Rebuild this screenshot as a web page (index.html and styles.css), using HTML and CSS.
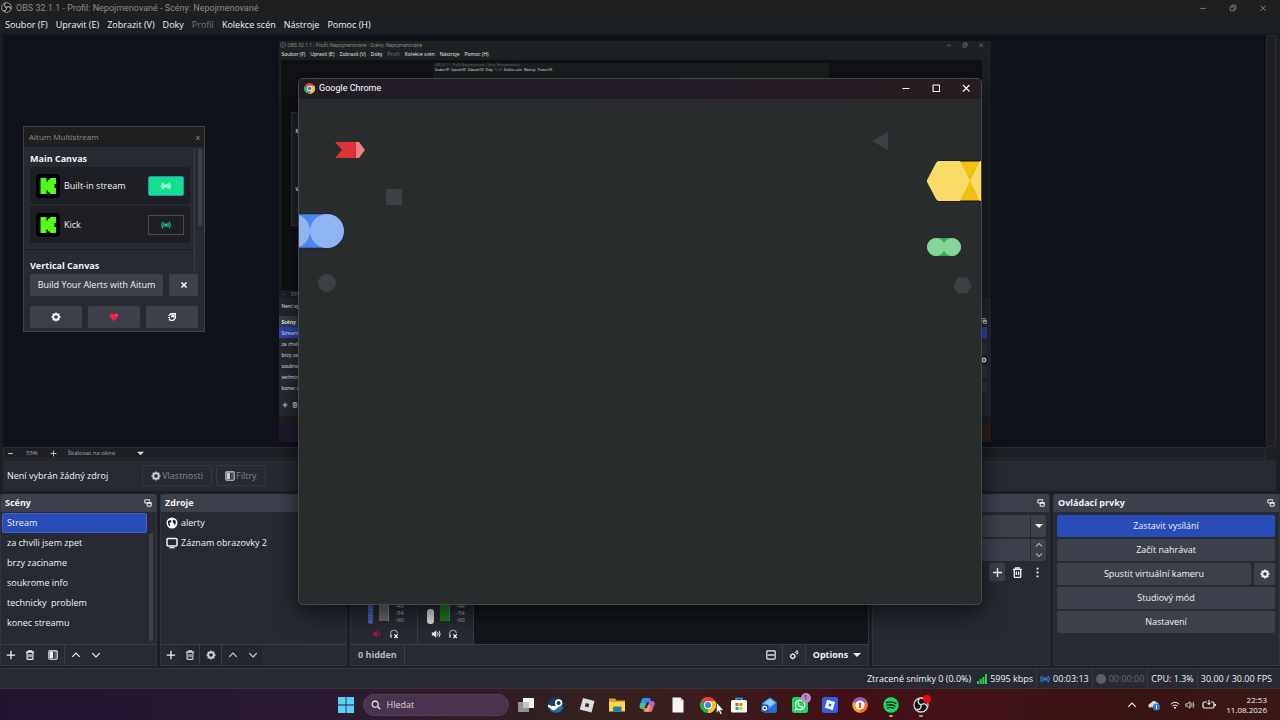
FILE: index.html
```html
<!DOCTYPE html>
<html lang="cs">
<head>
<meta charset="UTF-8">
<meta name="viewport" content="width=device-width, initial-scale=1.0">
<title>OBS 32.1.1</title>
<link rel="stylesheet" href="styles.css">
</head>
<body>

<!-- icons -->
<svg class="sprite" aria-hidden="true">
    <symbol id="obs" viewBox="0 0 16 16">
        <circle cx="8" cy="8" r="7" fill="#111" stroke="currentColor" stroke-width="1.3"/>
        <path d="M8 8C4.500 7 4.500 3.500 6.500 2M8 8c2.600-2.600 5.600-.8 5.800 1.600M8 8c.9 3.500-2.200 5.200-4.500 4.200" fill="none" stroke="currentColor" stroke-width="1.500"/>
    </symbol>
    <symbol id="min" viewBox="0 0 10 10"><path d="M1.500 5.500h7" stroke="currentColor" stroke-width="1"/></symbol>
    <symbol id="max" viewBox="0 0 10 10"><rect x="2" y="2" width="6.500" height="6.500" rx=".5" fill="none" stroke="currentColor" stroke-width="1.100"/></symbol>
    <symbol id="restore" viewBox="0 0 10 10"><path d="M1.500 3.500h5v5h-5zM3.500 3.500v-2h5v5h-2" fill="none" stroke="currentColor"/></symbol>
    <symbol id="close" viewBox="0 0 10 10"><path d="M2 2l6.500 6.500M8.500 2L2 8.500" stroke="currentColor" stroke-width="1.100"/></symbol>
    <symbol id="cross" viewBox="0 0 10 10"><path d="M2.500 2.500l5 5M7.500 2.500l-5 5" stroke="currentColor" stroke-width="1.700"/></symbol>
    <symbol id="gear" viewBox="0 0 12 12">
        <circle cx="6" cy="6" r="3.300" fill="none" stroke="currentColor" stroke-width="2.200"/>
        <path d="M6 .5v2M6 9.500v2M.5 6h2M9.500 6h2M2.100 2.100l1.400 1.400M8.500 8.500l1.400 1.400M2.100 9.900l1.400-1.400M8.500 3.500l1.400-1.400" stroke="currentColor" stroke-width="1.800"/>
    </symbol>
    <symbol id="gears" viewBox="0 0 12 12">
        <circle cx="4.500" cy="7.500" r="2.500" fill="none" stroke="currentColor" stroke-width="1.500"/>
        <circle cx="9.500" cy="2.800" r="1.400" fill="none" stroke="currentColor" stroke-width="1.200"/>
        <path d="M4.500 3.800v1M4.500 10.200v1.200M.8 7.500H2M7 7.500h1.200M9.500.4v1M9.500 4.200v1M7 2.800h1" stroke="currentColor"/>
    </symbol>
    <symbol id="filter" viewBox="0 0 12 12">
        <rect x="1" y="1" width="10" height="10" rx="1" fill="none" stroke="currentColor" stroke-width="1.300"/>
        <path d="M2 2h4v8H2z" fill="currentColor"/><path d="M7 2h3v8H7z" fill="currentColor" opacity=".25"/>
    </symbol>
    <symbol id="popout" viewBox="0 0 10 10"><path d="M7 3V1H1v4h3M4 4.500h5V9H4z" fill="none" stroke="currentColor" stroke-width="1.200"/><path d="M4 4h5v2H4z" fill="currentColor"/></symbol>
    <symbol id="plus" viewBox="0 0 12 12"><path d="M6 1v10M1 6h10" stroke="currentColor" stroke-width="1.500"/></symbol>
    <symbol id="minus" viewBox="0 0 12 12"><path d="M2 6h8" stroke="currentColor" stroke-width="1.500"/></symbol>
    <symbol id="trash" viewBox="0 0 12 12"><path d="M1 2.500h10M4 2V1h4v1M2.500 3v7.500q0 .7.7.7h5.600q.7 0 .7-.7V3M4.800 4.800v4M7.200 4.800v4" fill="none" stroke="currentColor" stroke-width="1.400"/></symbol>
    <symbol id="up" viewBox="0 0 12 12"><path d="M1.500 8.200L6 3.800l4.500 4.400" fill="none" stroke="currentColor" stroke-width="1.500"/></symbol>
    <symbol id="down" viewBox="0 0 12 12"><path d="M1.500 3.800L6 8.200l4.500-4.400" fill="none" stroke="currentColor" stroke-width="1.500"/></symbol>
    <symbol id="dots" viewBox="0 0 12 12"><path d="M5 .8h2v2H5zM5 5h2v2H5zM5 9.200h2v2H5z" fill="currentColor"/></symbol>
    <symbol id="caret" viewBox="0 0 8 8"><path d="M0 2h8L4 6z" fill="currentColor"/></symbol>
    <symbol id="live" viewBox="0 0 14 12">
        <circle cx="7" cy="6" r="2.100" fill="currentColor"/>
        <path d="M4.800 3q-2 3 0 6M9.200 3q2 3 0 6M2.600 1.500q-3 4.500 0 9M11.400 1.500q3 4.500 0 9" fill="none" stroke="currentColor" stroke-width="1.500"/>
    </symbol>
    <symbol id="kick" viewBox="0 0 24 24">
        <rect width="24" height="24" rx="4" fill="#000"/>
        <path d="M4.500 4h6v3.500h1.500V5.500h2V4h6v6h-1.500v4H20v6h-6v-1.500h-2v-2h-1.500V20h-6z" fill="#53fc18"/>
    </symbol>
    <symbol id="globe" viewBox="0 0 12 12">
        <circle cx="6" cy="6" r="5.500" fill="#fff"/>
        <path d="M2 4l2-1 1.500.5L5 5.500 3.500 6l.8 2-.8 1.500L2 7zM7 2.500l2.500 1L10 6 8.500 8 7.500 6 6.500 5z" fill="#272a33"/>
    </symbol>
    <symbol id="monitor" viewBox="0 0 12 12"><rect x="1" y="1.500" width="10" height="7.500" rx="1" fill="none" stroke="currentColor" stroke-width="1.500"/><path d="M3.500 10.700h5" stroke="currentColor" stroke-width="1.300"/></symbol>
    <symbol id="speaker" viewBox="0 0 12 12"><path d="M1 4.300h2.200L6.300 1.500v9L3.200 7.700H1z" fill="currentColor"/><path d="M7.800 3.800q1.500 2.200 0 4.400M9.600 2.200q2.600 3.800 0 7.600" fill="none" stroke="currentColor" stroke-width="1.200"/></symbol>
    <symbol id="volume" viewBox="0 0 12 12"><path d="M1 4.500h2.200L6 2v8L3.200 7.500H1z" fill="none" stroke="currentColor"/><path d="M7.800 4q1.300 2 0 4M9.500 2.600q2.300 3.400 0 6.800" fill="none" stroke="currentColor"/></symbol>
    <symbol id="muted" viewBox="0 0 12 12"><path d="M1 4.300h2.200L6.300 1.500v9L3.200 7.700H1zM7 6l1.500-2L10 6 8.500 8z" fill="currentColor"/></symbol>
    <symbol id="headphones" viewBox="0 0 12 12"><path d="M2 10V5.500q0-4 4-4t4 4" fill="none" stroke="#aaa" stroke-width="1.300"/><path d="M1.500 6.500h2v4h-2z" fill="#aaa"/><path d="M6.500 6.500l4 4.500M10.500 6.500l-4 4.500" stroke="#fff" stroke-width="1.500"/></symbol>
    <symbol id="layout" viewBox="0 0 12 12"><rect x="1" y="1" width="10" height="10" rx="1" fill="none" stroke="currentColor" stroke-width="1.400"/><path d="M2 6h8" stroke="currentColor" stroke-width="1.600"/></symbol>
    <symbol id="chrome" viewBox="0 0 16 16">
        <path d="M8 8L1.070 4A8 8 0 0 1 14.930 4z" fill="#ea4335"/>
        <path d="M8 8l6.930-4A8 8 0 0 1 8 16z" fill="#fbc116"/>
        <path d="M8 8v8A8 8 0 0 1 1.070 4z" fill="#34a853"/>
        <path d="M8 4h6.930A8 8 0 0 1 8 16l3.500-6z" fill="#fbc116"/>
        <circle cx="8" cy="8" r="4" fill="#fff"/><circle cx="8" cy="8" r="3" fill="#3b82f0"/>
    </symbol>
</svg>

<div class="obs">
    <header class="title-bar">
        <svg class="icon"><use href="#obs"/></svg>
        <span>OBS 32.1.1 - Profil: Nepojmenované - Scény: Nepojmenované</span>
        <div class="window-buttons">
            <button aria-label="Minimalizovat"><svg><use href="#min"/></svg></button>
            <button aria-label="Obnovit"><svg><use href="#restore"/></svg></button>
            <button aria-label="Zavřít"><svg><use href="#close"/></svg></button>
        </div>
    </header>
    <nav class="menu-bar">
        <a href="#">Soubor (F)</a>
        <a href="#">Upravit (E)</a>
        <a href="#">Zobrazit (V)</a>
        <a href="#">Doky</a>
        <a href="#" class="off">Profil</a>
        <a href="#">Kolekce scén</a>
        <a href="#">Nástroje</a>
        <a href="#">Pomoc (H)</a>
    </nav>

    <main class="preview">
        <div class="stage">
            <!-- captured desktop -->
            <div class="mini">
                <div class="mini-title">
                    <svg><use href="#obs"/></svg>
                    <span>OBS 32.1.1 - Profil: Nepojmenované - Scény: Nepojmenované</span>
                    <div class="mini-buttons">
                        <svg><use href="#min"/></svg>
                        <svg><use href="#restore"/></svg>
                        <svg><use href="#close"/></svg>
                    </div>
                </div>
                <div class="mini-menu">
                    <span>Soubor (F)</span><span>Upravit (E)</span><span>Zobrazit (V)</span><span>Doky</span><span class="off">Profil</span><span>Kolekce scén</span><span>Nástroje</span><span>Pomoc (H)</span>
                </div>
                <div class="mini-stage">
                    <div class="nano">
                        <div class="nano-title">OBS 32.1.1 - Profil: Nepojmenované - Scény: Nepojmenované</div>
                        <div class="nano-menu"><span>Soubor (F)</span><span>Upravit (E)</span><span>Zobrazit (V)</span><span>Doky</span><span class="off">Profil</span><span>Kolekce scén</span><span>Nástroje</span><span>Pomoc (H)</span></div>
                    </div>
                    <div class="mini-float"><b>Main Canvas</b><b>Vertical Canvas</b></div>
                </div>
                <div class="mini-zoom">−&nbsp;&nbsp;&nbsp;&nbsp;55%</div>
                <div class="mini-context">Není vybrán žádný zdroj</div>
                <div class="mini-docks">
                    <div class="mini-scenes">
                        <b>Scény</b>
                        <span class="selected">Stream</span>
                        <span>za chvíli jsem</span>
                        <span>brzy zaciname</span>
                        <span>soukrome info</span>
                        <span>technicky</span>
                        <span>konec streamu</span>
                        <div class="mini-tools"><svg><use href="#plus"/></svg><svg><use href="#trash"/></svg></div>
                    </div>
                    <div class="mini-controls">
                        <svg><use href="#popout"/></svg>
                        <i class="on"></i><i></i>
                        <svg><use href="#gear"/></svg>
                        <i></i><i></i>
                    </div>
                </div>
                <div class="mini-taskbar"></div>
            </div>
        </div>
        <div class="scroll-track"></div>
    </main>

    <div class="zoom-bar">
        <button aria-label="Oddálit"><svg><use href="#minus"/></svg></button>
        <span>55%</span>
        <button aria-label="Přiblížit"><svg><use href="#plus"/></svg></button>
        <div class="zoom-mode">
            <select aria-label="Měřítko"><option>Škálovat na okno</option></select>
            <svg><use href="#caret"/></svg>
        </div>
    </div>

    <div class="context-bar">
        <span>Není vybrán žádný zdroj</span>
        <button disabled><svg><use href="#gear"/></svg>Vlastnosti</button>
        <button disabled><svg><use href="#filter"/></svg>Filtry</button>
    </div>

    <div class="docks">
        <section class="dock">
            <h2>Scény <svg><use href="#popout"/></svg></h2>
            <div class="scene-body">
                <ul class="scenes">
                    <li class="selected">Stream</li>
                    <li>za chvíli jsem zpet</li>
                    <li>brzy zaciname</li>
                    <li>soukrome info</li>
                    <li>technicky&nbsp; problem</li>
                    <li>konec streamu</li>
                </ul>
                <div class="scene-scroll"></div>
            </div>
            <div class="tools">
                <button aria-label="Přidat"><svg><use href="#plus"/></svg></button>
                <button aria-label="Odebrat"><svg><use href="#trash"/></svg></button>
                <button aria-label="Filtry scény" class="spaced"><svg><use href="#filter"/></svg></button>
                <button aria-label="Nahoru" class="split"><svg><use href="#up"/></svg></button>
                <button aria-label="Dolů"><svg><use href="#down"/></svg></button>
            </div>
        </section>

        <section class="dock">
            <h2>Zdroje</h2>
            <ul class="sources">
                <li><svg><use href="#globe"/></svg>alerty</li>
                <li><svg><use href="#monitor"/></svg>Záznam obrazovky 2</li>
            </ul>
            <div class="tools">
                <button aria-label="Přidat zdroj"><svg><use href="#plus"/></svg></button>
                <button aria-label="Odebrat zdroj" class="dim"><svg><use href="#trash"/></svg></button>
                <button aria-label="Vlastnosti zdroje" class="split dim"><svg><use href="#gear"/></svg></button>
                <button aria-label="Zdroj nahoru" class="split dim"><svg><use href="#up"/></svg></button>
                <button aria-label="Zdroj dolů" class="dim"><svg><use href="#down"/></svg></button>
            </div>
        </section>

        <section class="dock mixer">
            <div class="channels">
                <div class="channel">
                    <div class="meters">
                        <div class="fader"></div>
                        <div class="meter"></div>
                        <div class="scale"><span>-48</span><span>-54</span><span>-60</span></div>
                    </div>
                    <div class="channel-buttons">
                        <button aria-label="Zrušit ztlumení" class="red"><svg><use href="#muted"/></svg></button>
                        <button aria-label="Sledování"><svg><use href="#headphones"/></svg></button>
                    </div>
                </div>
                <div class="channel">
                    <div class="meters">
                        <div class="fader knob"></div>
                        <div class="meter green"></div>
                        <div class="scale"><span>-48</span><span>-54</span><span>-60</span></div>
                    </div>
                    <div class="channel-buttons">
                        <button aria-label="Ztlumit"><svg><use href="#speaker"/></svg></button>
                        <button aria-label="Sledování zvuku"><svg><use href="#headphones"/></svg></button>
                    </div>
                </div>
            </div>
            <div class="mixer-bar">
                <span>0 hidden</span>
                <button aria-label="Rozložení"><svg><use href="#layout"/></svg></button>
                <button aria-label="Pokročilé"><svg><use href="#gears"/></svg></button>
                <button class="options">Options <svg><use href="#caret"/></svg></button>
            </div>
        </section>

        <section class="dock">
            <h2><svg><use href="#popout"/></svg></h2>
            <div class="transitions">
                <div class="field">
                    <select aria-label="Přechod"></select>
                    <span class="arrows"><svg><use href="#caret"/></svg></span>
                </div>
                <div class="field">
                    <input type="text" aria-label="Doba trvání">
                    <span class="arrows"><svg><use href="#up"/></svg><svg><use href="#down"/></svg></span>
                </div>
                <div class="transition-tools">
                    <button aria-label="Přidat přechod" class="filled"><svg><use href="#plus"/></svg></button>
                    <button aria-label="Odebrat přechod"><svg><use href="#trash"/></svg></button>
                    <button aria-label="Další"><svg><use href="#dots"/></svg></button>
                </div>
            </div>
        </section>

        <section class="dock">
            <h2>Ovládací prvky <svg><use href="#popout"/></svg></h2>
            <div class="controls">
                <button class="on">Zastavit vysílání</button>
                <button>Začít nahrávat</button>
                <div class="pair">
                    <button>Spustit virtuální kameru</button>
                    <button aria-label="Nastavení kamery"><svg><use href="#gear"/></svg></button>
                </div>
                <button>Studiový mód</button>
                <button>Nastavení</button>
            </div>
        </section>
    </div>

    <footer class="status-bar">
        <span>Ztracené snímky 0 (0.0%)</span>
        <span><svg class="signal" viewBox="0 0 10 10"><path d="M0 7h2v3H0zM2.700 5h2v5h-2zM5.400 3h2v7h-2zM8 0h2v10H8z" fill="#2fcf4a"/></svg>5995 kbps</span>
        <span class="line"><svg class="blue"><use href="#live"/></svg>00:03:13</span>
        <span class="line faded"><svg viewBox="0 0 10 10"><circle cx="5" cy="5" r="5" fill="#5c5e62"/></svg>00:00:00</span>
        <span class="line">CPU: 1.3%</span>
        <span class="line">30.00 / 30.00 FPS</span>
    </footer>
</div>

<!-- Windows taskbar -->
<div class="taskbar">
    <div class="task-center">
        <button class="start" aria-label="Start"><svg viewBox="0 0 16 16"><path d="M0 0h7.600v7.600H0zM8.400 0H16v7.600H8.400zM0 8.400h7.600V16H0zM8.400 8.400H16V16H8.400z" fill="#5bd0f7"/></svg></button>
        <label class="search">
            <svg viewBox="0 0 12 12"><circle cx="5" cy="5" r="3.700" fill="none" stroke="#fff" stroke-width="1.300"/><path d="M7.800 7.800l3.200 3.200" stroke="#fff" stroke-width="1.400"/></svg>
            <input type="text" placeholder="Hledat" aria-label="Hledat">
        </label>
        <div class="apps">
            <svg viewBox="0 0 16 16"><rect x="5" y="1" width="11" height="10" fill="#f2f2f2"/><rect x="0" y="5" width="11" height="10" fill="#8f918f"/><rect x="5" y="5" width="6" height="6" fill="#c4c6c3"/></svg>
            <svg viewBox="0 0 16 16"><circle cx="8" cy="8" r="7.800" fill="#173d63"/><path d="M.5 10a7.800 7.800 0 0 0 15 0z" fill="#1a75aa"/><path d="M0 7.500l6 2.500 3-3 3 2-4 3-2.500 1L0 10z" fill="#fff"/><circle cx="10.600" cy="6" r="2.900" fill="#173d63" stroke="#fff" stroke-width="1.600"/><circle cx="5.500" cy="11" r="2.300" fill="#fff"/></svg>
            <svg viewBox="0 0 16 16"><path d="M4 1l11.500 3L12.500 15.500.8 12.500z" fill="#d9dde0"/><path d="M6.800 6l3.500.9-.9 3.400-3.500-.9z" fill="#292b2d"/></svg>
            <svg viewBox="0 0 16 16"><path d="M0 1.500h6l1.500 2H16V14H0z" fill="#e3a51c"/><path d="M0 5h16v9.500H0z" fill="#fcd456"/><path d="M4 10.500q0-1 1-1h6.500q1 0 1 1v4H4z" fill="#1f7fae"/></svg>
            <svg viewBox="0 0 16 16"><path d="M4.500 1H10q1.500 0 2 2l-1 2H8l-2.500 7H3Q-.5 11.500.8 8L2.500 3Q3 1 4.500 1z" fill="#2a93e8"/><path d="M2 6l4-.5L4.500 12H3Q0 11.500 1 8z" fill="#4acb7b"/><path d="M11.500 15H6q-1.500 0-2-2l1-2h3l2.500-7H13q3.500.5 2.200 4l-1.700 5q-.5 2-2 2z" fill="#e0609a"/><path d="M6 12l2-1 1-3h3l-2 6q-1 1-3 1-1.500-1-1-3z" fill="#f5a048"/><path d="M10.500 4H13q3.500.5 2.200 4l-4.200 1z" fill="#a865e0"/></svg>
            <svg viewBox="0 0 16 16"><path d="M2.500.5h8l3 3v12h-11z" fill="#f6f4f2"/><path d="M10.500.5v3h3z" fill="#b9b6b3"/></svg>
            <svg><use href="#chrome"/></svg>
            <svg viewBox="0 0 16 16"><path d="M5 4V1.500h6V4" fill="none" stroke="#36a6e8" stroke-width="1.500"/><rect y="3" width="16" height="12.500" rx="1.500" fill="#f4f4f4"/><path d="M4.500 6h3v3h-3z" fill="#f25022"/><path d="M8.500 6h3v3h-3z" fill="#7fba00"/><path d="M4.500 10h3v3h-3z" fill="#00a4ef"/><path d="M8.500 10h3v3h-3z" fill="#ffb900"/></svg>
            <svg viewBox="0 0 16 16"><path d="M1 6l8-5.500L15.500 5v9q0 1.500-1.500 1.500H3z" fill="#3d9be9"/><path d="M3 6l6-4 5 4-6 4z" fill="#8fccf5"/><path d="M15.500 6v8q0 1.500-1.500 1.500H4z" fill="#1f6fd0"/><rect y="7.500" width="7.500" height="7.500" rx="1.500" fill="#1559b5"/><circle cx="3.700" cy="11.200" r="1.900" fill="none" stroke="#fff" stroke-width="1.200"/></svg>
            <div class="app">
                <svg viewBox="0 0 16 16"><rect width="16" height="16" rx="2.500" fill="#1fd35f"/><path d="M3.500 12.800l.6-2.400a4.700 4.700 0 1 1 1.800 1.700z" fill="none" stroke="#fff" stroke-width="1.200"/><path d="M6 5.500l1 0 .6 1.500-.6.700q.6 1.200 1.800 1.700l.8-.7 1.300.7q-.2 1.500-1.800 1.300Q6 9.700 5.500 7z" fill="#fff"/></svg>
                <span class="badge">1</span>
            </div>
            <svg viewBox="0 0 16 16"><rect width="16" height="16" rx="2.500" fill="#3160e8"/><path d="M5 2.800l8 2.200-2.200 8L2.800 10.800z" fill="#fff"/><path d="M7 6.400l2.600.7-.7 2.500-2.500-.7z" fill="#3160e8"/></svg>
            <svg viewBox="0 0 16 16"><circle cx="8" cy="8" r="7.700" fill="#f5a623"/><path d="M1 5A7.700 7.700 0 0 1 15 5l-3 1H4z" fill="#8c54d8"/><path d="M15 5a7.700 7.700 0 0 1-7 10.700V11z" fill="#f4692d"/><circle cx="8" cy="8" r="4.600" fill="#fff"/><circle cx="8" cy="7" r="1.500" fill="#d1551f"/><path d="M7.200 8h1.600l.5 3H6.700z" fill="#d1551f"/></svg>
            <div class="app">
                <svg viewBox="0 0 16 16"><circle cx="8" cy="8" r="7.700" fill="#1ed760"/><path d="M3.500 5.500q5-1.500 9.300.9M4 8.200q4.200-1.200 7.800.9M4.500 10.800q3.500-1 6.300.7" fill="none" stroke="#10291a" stroke-width="1.400" stroke-linecap="round"/></svg>
                <span class="running"></span>
            </div>
            <div class="app light">
                <svg><use href="#obs"/></svg>
                <span class="dot"></span>
                <span class="running"></span>
            </div>
        </div>
        <svg class="cursor" viewBox="0 0 8 13"><path d="M.5.500v10.500l2.300-2.200 1.700 3.700 1.600-.8-1.700-3.500h3.100z" fill="#fff" stroke="#333" stroke-width=".5"/></svg>
    </div>
    <div class="tray">
        <svg><use href="#up"/></svg>
        <svg class="cloud" viewBox="0 0 14 12"><path d="M2 8.500Q0 5 4 4q2-3.500 6-.5 2.500.5 2 4.500z" fill="#d5d7da"/><circle cx="9.500" cy="8" r="3.600" fill="#2b7cd3"/><path d="M9.500 6v4" stroke="#fff"/></svg>
        <svg viewBox="0 0 12 12"><path d="M1 5q5-4.500 10 0M3 7.200q3-2.700 6 0" fill="none" stroke="#eee" stroke-width="1.200"/><circle cx="6" cy="9.300" r="1.200" fill="#eee"/></svg>
        <svg><use href="#volume"/></svg>
        <svg class="battery" viewBox="0 0 14 12"><path d="M5 3H2.500q-1.500 0-1.500 1.500v3Q1 9 2.500 9h8Q12 9 12 7.500v-3Q12 3 10.500 3H9M7 1v5M5.500 4.500h3M13.300 5v2" fill="none" stroke="#eee" stroke-width="1.200"/></svg>
        <div class="clock">22:53<br>11.08.2026</div>
    </div>
</div>

<!-- Aitum floating dock -->
<aside class="aitum">
    <header>Aitum Multistream <button aria-label="Zavřít panel">x</button></header>
    <div class="aitum-body">
        <div class="aitum-list">
            <div class="canvas">
                <h3>Main Canvas</h3>
                <div class="output">
                    <svg><use href="#kick"/></svg>
                    <span>Built-in stream</span>
                    <button class="live" aria-label="Built-in stream živě"><svg><use href="#live"/></svg></button>
                </div>
                <div class="output">
                    <svg><use href="#kick"/></svg>
                    <span>Kick</span>
                    <button aria-label="Kick živě"><svg><use href="#live"/></svg></button>
                </div>
            </div>
            <div class="canvas next">
                <h3>Vertical Canvas</h3>
            </div>
        </div>
        <div class="aitum-scroll"></div>
    </div>
    <div class="aitum-row">
        <button>Build Your Alerts with Aitum</button>
        <button aria-label="Skrýt"><svg><use href="#cross"/></svg></button>
    </div>
    <div class="aitum-row bottom">
        <button aria-label="Nastavení panelu"><svg><use href="#gear"/></svg></button>
        <button aria-label="Podpořit"><svg viewBox="0 0 12 12"><path d="M6 11L1.300 6.300Q-.2 4 1.500 2.200 4 .5 6 3 8 .5 10.500 2.200 12.200 4 10.700 6.300z" fill="#f0213c"/><path d="M8 3.500l1.500.5" stroke="#ff9a9a"/></svg></button>
        <button aria-label="Aitum"><svg viewBox="0 0 12 12"><path d="M2 4.500L5 2h5v5L7.500 10H4L2.500 8" fill="none" stroke="#fff" stroke-width="1.700"/><path d="M4.500 6.500L8 4M8 6.500V4H5.500M1 6.500h2.500" fill="none" stroke="#fff" stroke-width="1.300"/></svg></button>
    </div>
</aside>

<!-- Chrome window -->
<div class="chrome">
    <header>
        <svg class="icon"><use href="#chrome"/></svg>
        <span>Google Chrome</span>
        <div class="window-buttons">
            <button aria-label="Minimalizovat Chrome"><svg><use href="#min"/></svg></button>
            <button aria-label="Maximalizovat Chrome"><svg><use href="#max"/></svg></button>
            <button aria-label="Zavřít Chrome"><svg><use href="#close"/></svg></button>
        </div>
    </header>
    <svg class="shapes" viewBox="0 0 682 505" preserveAspectRatio="xMidYMin slice" aria-hidden="true">
        <path d="M36 43h21v16H36l7-8z" fill="#dc3238"/>
        <path d="M57 43h3l6 8-6 8h-3z" fill="#f28084"/>
        <rect x="87" y="90" width="16" height="16" rx="1" fill="#3c4042"/>
        <path d="M-1 115h29a17 17 0 0 1 0 34H-1z" fill="#4a86ee" stroke="#14171c" stroke-width=".5"/>
        <circle cx="-6" cy="132" r="17" fill="#8fb5f5"/>
        <circle cx="28" cy="132" r="17" fill="#8fb5f5"/>
        <circle cx="28" cy="184" r="9" fill="#3c4042"/>
        <path d="M573 42l16-9v18z" fill="#3c4042"/>
        <path d="M639 62h44v40h-44l-11-20z" fill="#f2c010" stroke="#111" stroke-width="1"/>
        <path d="M640 62h21l10 20-10 20h-21q-2 0-3-2l-9-17v-2l9-17q1-2 3-2zM671 82l10-20h2v40h-2z" fill="#fbdb68"/>
        <rect x="628" y="139" width="34" height="18" rx="9" fill="#3aa757"/>
        <circle cx="637" cy="148" r="9" fill="#84d696"/>
        <circle cx="653" cy="148" r="9" fill="#84d696"/>
        <path d="M659 179h9l4 8-4 7h-9l-4-7z" fill="#3c4042" stroke="#3c4042" stroke-linejoin="round"/>
    </svg>
</div>

</body>
</html>
```
FILE: styles.css
```css
* {
    box-sizing: border-box;
}

body {
    margin: 0;
    height: 100vh;
    display: flex;
    flex-direction: column;
    overflow: hidden;
    background-color: #1d1f25;
    color: #f2f2f4;
    font-family: "Open Sans", "Noto Sans", sans-serif;
    font-size: 9px;
    line-height: 12px;
}

button, input, select {
    font: inherit;
    color: inherit;
    background: none;
    border: none;
    padding: 0;
    margin: 0;
    outline: none;
    appearance: none;
}

button {
    display: flex;
    align-items: center;
    justify-content: center;
}

a {
    color: inherit;
    text-decoration: none;
}

ul, h2, h3 {
    margin: 0;
    padding: 0;
    list-style: none;
    font-size: 9px;
}

svg {
    width: 10px;
    height: 10px;
    flex-shrink: 0;
}

.sprite {
    position: absolute;
    width: 0;
    height: 0;
}

.obs {
    flex: 1;
    min-height: 0;
    display: flex;
    flex-direction: column;
}

.title-bar {
    height: 15px;
    display: flex;
    align-items: center;
    gap: 4px;
    padding: 0 13px 0 1px;
    background-color: #1f1f1f;
    color: #8c8c8c;
    font-family: Roboto, "Open Sans", sans-serif;
}

.title-bar .icon {
    width: 11px;
    height: 11px;
    color: #b8b8b8;
}

.window-buttons {
    display: flex;
    gap: 20px;
    margin-left: auto;
}

.title-bar .window-buttons {
    gap: 22px;
}

.title-bar .window-buttons svg {
    width: 8px;
    height: 8px;
}

.menu-bar {
    height: 19px;
    display: flex;
    align-items: center;
    gap: 8px;
    padding: 0 5px;
    background-color: #1b2025;
}

.off {
    color: #73767b;
}

/* preview */
.preview {
    flex: 1;
    min-height: 0;
    display: flex;
    padding: 0 4px 0 3px;
    border-top: 1px solid #15171b;
}

.stage {
    flex: 1;
    display: flex;
    align-items: center;
    justify-content: center;
    background-color: #10131c;
}

.scroll-track {
    width: 10px;
    border: 1px solid #2a2d33;
}

.mini {
    width: 712px;
    height: 401px;
    display: flex;
    flex-direction: column;
    background-color: #1d2024;
    font-size: 5px;
    line-height: 8px;
    white-space: nowrap;
    overflow: hidden;
}

.mini svg {
    width: 6px;
    height: 6px;
}

.mini-title {
    height: 9px;
    display: flex;
    align-items: center;
    gap: 2px;
    padding: 0 7px 0 1px;
    background-color: #1f2122;
    color: #858585;
    font-family: Roboto, "Open Sans", sans-serif;
}

.mini-buttons {
    display: flex;
    gap: 10px;
    margin-left: auto;
}

.mini-menu {
    height: 9px;
    display: flex;
    align-items: center;
    gap: 5px;
    padding: 0 3px;
    background-color: #1c2122;
}

.mini-stage {
    position: relative;
    height: 230px;
    margin: 1px 9px 0 2px;
    padding-top: 3px;
    background-color: #101216;
}

.nano {
    width: 396px;
    height: 223px;
    margin: 0 auto;
    padding: 0 2px;
    background-color: #1b1f20;
    font-size: 3px;
    line-height: 5px;
}

.nano-title {
    color: #777;
}

.nano-menu {
    display: flex;
    gap: 2px;
}

.mini-float {
    position: absolute;
    left: 10px;
    top: 52px;
    width: 100px;
    height: 114px;
    padding: 14px 4px;
    display: flex;
    flex-direction: column;
    gap: 50px;
    background-color: #202329;
    border: 1px solid #34363a;
}

.mini-zoom {
    height: 8px;
    padding: 0 4px;
    color: #8a8a8a;
}

.mini-context {
    height: 18px;
    padding: 4px 3px;
    background-color: #24272e;
}

.mini-docks {
    height: 100px;
    display: flex;
    justify-content: space-between;
}

.mini-scenes {
    width: 86px;
    display: flex;
    flex-direction: column;
    background-color: #262931;
}

.mini-scenes b, .mini-scenes span {
    height: 11px;
    flex-shrink: 0;
    padding: 2px 3px;
}

.mini-scenes b {
    background-color: #3a3d46;
}

.mini-scenes .selected {
    background-color: #2b46ac;
}

.mini-tools {
    display: flex;
    gap: 4px;
    padding: 9px 3px;
}

.mini-controls {
    width: 126px;
    padding: 2px 4px;
    display: flex;
    flex-direction: column;
    align-items: flex-end;
    gap: 3px;
    background-color: #262931;
}

.mini-controls i {
    width: 100%;
    height: 12px;
    background-color: #30333b;
}

.mini-controls .on {
    background-color: #2b46ac;
}

.mini-taskbar {
    height: 18px;
    margin-top: auto;
    background: linear-gradient(90deg, #201a2d, #301517 60%, #30201c);
}

/* bars under the preview */
.zoom-bar {
    height: 12px;
    margin: 0 14px 1px 3px;
    display: flex;
    align-items: center;
    gap: 11px;
    padding-left: 3px;
    border: 1px solid #2a2d33;
    background-color: #1e2025;
    color: #a6a7aa;
    font-size: 6px;
    line-height: 10px;
}

.zoom-bar svg {
    width: 7px;
    height: 7px;
    color: #ddd;
}

.zoom-bar > span {
    padding: 0 1px;
}

.zoom-mode {
    width: 76px;
    display: flex;
    align-items: center;
    justify-content: space-between;
}

.context-bar {
    height: 31px;
    display: flex;
    align-items: center;
    gap: 4px;
    margin: 0 4px 3px 3px;
    padding: 0 4px;
    background-color: #272a33;
}

.context-bar span {
    margin-right: 30px;
}

.context-bar button {
    height: 21px;
    padding: 0 8px;
    gap: 1px;
    border: 1px solid #353842;
    border-radius: 2px;
    color: #85878d;
}

.context-bar svg {
    color: #c9cacc;
}

/* docks */
.docks {
    height: 172px;
    display: grid;
    grid-template-columns: 157px 187px 1fr 178px 227px;
    gap: 3px;
}

.dock {
    display: flex;
    flex-direction: column;
    min-width: 0;
    background-color: #272a33;
    border: 1px solid #31343d;
    border-top: none;
}

.dock h2 {
    height: 18px;
    display: flex;
    align-items: center;
    padding: 0 4px;
    background-color: #3c404b;
    border-radius: 2px 2px 0 0;
}

.dock h2 svg {
    width: 8px;
    height: 8px;
    margin-left: auto;
}

.scene-body {
    flex: 1;
    display: flex;
    gap: 2px;
    padding: 1px 3px 3px 1px;
}

.scenes {
    flex: 1;
}

.scenes li {
    height: 20px;
    padding: 4px 5px;
    border-radius: 2px;
}

.scenes .selected {
    background-color: #284cb8;
    border: 1px solid #4763c4;
    padding: 3px 4px;
}

.scene-scroll {
    width: 4px;
    margin-top: 20px;
    background-color: #3c404b;
    border-radius: 2px;
}

.sources {
    flex: 1;
    padding-top: 1px;
}

.sources li {
    height: 20px;
    display: flex;
    align-items: center;
    gap: 3px;
    padding: 0 5px;
}

.sources svg {
    width: 12px;
    height: 12px;
}

.tools {
    height: 21px;
    display: flex;
    align-items: center;
    border-top: 1px solid #3a3d46;
}

.tools button {
    width: 19px;
    height: 20px;
}

.tools .spaced {
    margin: 0 2px 0 4px;
}

.tools .split {
    width: 22px;
    border-left: 1px solid #3a3d46;
}

.tools .dim {
    background-color: #23262e;
    color: #cfd0d2;
}

.channels {
    flex: 1;
    display: flex;
    background-color: #14181c;
}

.channel {
    width: 67px;
    padding: 0 0 5px 17px;
    display: flex;
    flex-direction: column;
    justify-content: flex-end;
    gap: 3px;
    background-color: #272a33;
    border-right: 1px solid #3a3d46;
}

.channel + .channel {
    width: 56px;
    padding: 0 0 5px 9px;
}

.meters {
    display: flex;
    gap: 6px;
    align-items: flex-end;
}

.fader {
    width: 5px;
    height: 80px;
    margin-bottom: 2px;
    border-radius: 2px;
    background: repeating-linear-gradient(#3f5cb4 0, #3f5cb4 5px, #5c6fae 5px, #5c6fae 6px);
}

.knob {
    width: 7px;
    height: 15px;
    border-radius: 3px;
    background: #dcdde0;
}

.meter {
    width: 10px;
    height: 80px;
    margin-bottom: 5px;
    background: #66686c;
    border-right: 1px solid #85878a;
}

.green {
    background: #1d7a25;
    border-color: #2c9a36;
}

.scale {
    display: flex;
    flex-direction: column;
    color: #b0b1b4;
    font-size: 6px;
    line-height: 7px;
    margin-bottom: 2px;
}

.channel-buttons {
    display: flex;
    gap: 7px;
    padding-left: 4px;
}

.red {
    color: #b0123c;
}

.mixer-bar {
    height: 21px;
    display: flex;
    align-items: center;
    border-top: 1px solid #3a3d46;
    font-weight: bold;
}

.mixer-bar span {
    width: 54px;
    line-height: 20px;
    padding-left: 7px;
    margin-right: auto;
    border-right: 1px solid #3a3d46;
    color: #b7b8bc;
}

.mixer-bar button {
    width: 23px;
    height: 20px;
    border-right: 1px solid #3a3d46;
}

.mixer-bar .options {
    width: 62px;
    gap: 5px;
    border-right: none;
}

.options svg {
    width: 8px;
    height: 8px;
}

.transitions {
    display: flex;
    flex-direction: column;
    gap: 2px;
    padding: 3px;
}

.field {
    height: 22px;
    display: flex;
    background-color: #3c404b;
    border-radius: 2px;
}

.field input, .field select {
    flex: 1;
    min-width: 0;
}

.arrows {
    width: 16px;
    display: flex;
    flex-direction: column;
    align-items: center;
    justify-content: center;
    border-left: 1px solid #272a33;
}

.arrows svg {
    width: 8px;
}

.transition-tools {
    display: flex;
    justify-content: flex-end;
    gap: 4px;
    padding-right: 1px;
}

.transition-tools button {
    width: 16px;
    height: 18px;
    border-radius: 2px;
}

.transition-tools svg {
    width: 11px;
    height: 11px;
}

.filled {
    background-color: #3c404b;
}

.controls {
    display: flex;
    flex-direction: column;
    gap: 2px;
    padding: 3px 4px 3px 3px;
}

.controls button {
    width: 100%;
    height: 22px;
    border-radius: 2px;
    background-color: #3c404b;
}

.controls .on {
    background-color: #284cb8;
}

.pair {
    display: grid;
    grid-template-columns: 1fr 21px;
    gap: 3px;
}

.status-bar {
    height: 20px;
    margin-top: 2px;
    display: flex;
    justify-content: flex-end;
    padding-right: 5px;
    background-color: #272a33;
    border-top: 1px solid #353842;
}

.status-bar span {
    display: flex;
    align-items: center;
    gap: 3px;
    padding: 0 3px;
}

.status-bar .line {
    border-left: 1px solid #353842;
}

.blue {
    color: #3a7ddb;
}

.faded {
    color: #65676d;
}

/* taskbar */
.taskbar {
    height: 32px;
    display: grid;
    grid-template-columns: 1fr auto 1fr;
    align-items: center;
    background: linear-gradient(90deg, #21152f 0, #2b1a33 25%, #33201f 45%, #38201e 52%, #421017 66%, #43121a 75%, #381513 88%, #3a1815);
    border-top: 1px solid #38333b;
}

.task-center {
    grid-column: 2;
    position: relative;
    display: flex;
    align-items: center;
    padding-right: 6px;
}

.start svg, .apps svg {
    width: 16px;
    height: 16px;
}

.search {
    width: 146px;
    height: 22px;
    margin: 0 2px 0 9px;
    padding: 0 7px;
    display: flex;
    align-items: center;
    gap: 6px;
    border-radius: 11px;
    background-color: #4a334e;
    border: 1px solid #553d58;
}

.search input {
    width: 100%;
}

.search input::placeholder {
    color: #dcd5de;
    opacity: 1;
}

.apps {
    width: 426px;
    display: grid;
    grid-template-columns: repeat(14, 1fr);
    justify-items: center;
}

.app {
    position: relative;
    height: 16px;
}

.light {
    color: #d8d8d8;
}

.badge {
    position: absolute;
    left: 9px;
    top: -4px;
    width: 10px;
    height: 10px;
    border-radius: 5px;
    background-color: #c786cf;
    color: #2b1030;
    font-size: 7px;
    line-height: 10px;
    text-align: center;
}

.dot {
    position: absolute;
    right: -2px;
    top: -2px;
    width: 8px;
    height: 8px;
    border-radius: 50%;
    background-color: #f00808;
}

.running {
    position: absolute;
    left: 6px;
    bottom: -4px;
    width: 4px;
    height: 2px;
    border-radius: 1px;
    background-color: #b09a9a;
}

.cursor {
    position: absolute;
    left: 378px;
    top: 8px;
    width: 8px;
    height: 13px;
}

.tray {
    display: flex;
    align-items: center;
    justify-content: flex-end;
    gap: 5px;
    padding-right: 13px;
}

.tray .cloud {
    width: 14px;
    height: 12px;
    margin: 0 4px 0 5px;
}

.tray .battery {
    width: 14px;
    height: 12px;
    margin-left: 2px;
}

.clock {
    margin-left: 5px;
    font-size: 8px;
    line-height: 10px;
    text-align: right;
}

/* floating Aitum panel */
.aitum {
    position: absolute;
    left: 23px;
    top: 126px;
    width: 182px;
    height: 206px;
    display: flex;
    flex-direction: column;
    background-color: #272a33;
    border: 1px solid #404145;
}

.aitum header {
    height: 20px;
    display: flex;
    align-items: center;
    justify-content: space-between;
    padding: 0 4px 0 5px;
    background-color: #1f1f1f;
    color: #8e8e8e;
    font-size: 8px;
}

.aitum-body {
    height: 125px;
    display: flex;
    gap: 3px;
    padding: 1px 2px 0 0;
}

.aitum-list {
    flex: 1;
    border-right: 1px solid #3a3d46;
}

.canvas {
    height: 102px;
    padding: 5px 4px 0 6px;
    display: flex;
    flex-direction: column;
    gap: 2px;
    border-bottom: 1px solid #1d1f25;
}

.next {
    height: 22px;
    padding-top: 10px;
    border: none;
}

.output {
    height: 37px;
    display: flex;
    align-items: center;
    gap: 4px;
    padding: 0 6px;
    border-radius: 3px;
    background-color: #1d1f25;
}

.output > svg {
    width: 24px;
    height: 24px;
}

.output button {
    width: 36px;
    height: 20px;
    margin-left: auto;
    border: 1px solid #4a4d55;
    color: #1fc98a;
}

.output .live {
    background-color: #12e08f;
    border-color: #2d8fc0;
    border-radius: 2px;
    color: #d4fff0;
}

.aitum-scroll {
    width: 4px;
    height: 78px;
    background-color: #3c404b;
    border-radius: 2px;
}

.aitum-row {
    display: grid;
    grid-template-columns: 133px 1fr;
    gap: 6px;
    padding: 2px 6px 10px 6px;
}

.aitum-row button {
    height: 22px;
    border-radius: 2px;
    background-color: #3c404b;
}

.aitum .bottom {
    grid-template-columns: repeat(3, 1fr);
    padding: 0 6px;
}

/* Chrome window */
.chrome {
    position: absolute;
    left: calc(50% - 342px);
    top: 78px;
    width: 684px;
    height: 527px;
    display: flex;
    flex-direction: column;
    overflow: hidden;
    background-color: #282c2c;
    border: 1px solid #46484a;
    border-radius: 5px;
    box-shadow: 0 8px 24px rgba(0, 0, 0, 0.6);
}

.chrome header {
    height: 20px;
    flex-shrink: 0;
    display: flex;
    align-items: center;
    gap: 4px;
    padding: 0 10px 2px 5px;
    background: linear-gradient(90deg, #211d27, #231c28 50%, #281c20);
    color: #fff;
    font-family: Roboto, "Open Sans", sans-serif;
}

.chrome .icon {
    width: 11px;
    height: 11px;
}

.shapes {
    width: 100%;
    height: 505px;
}
```
